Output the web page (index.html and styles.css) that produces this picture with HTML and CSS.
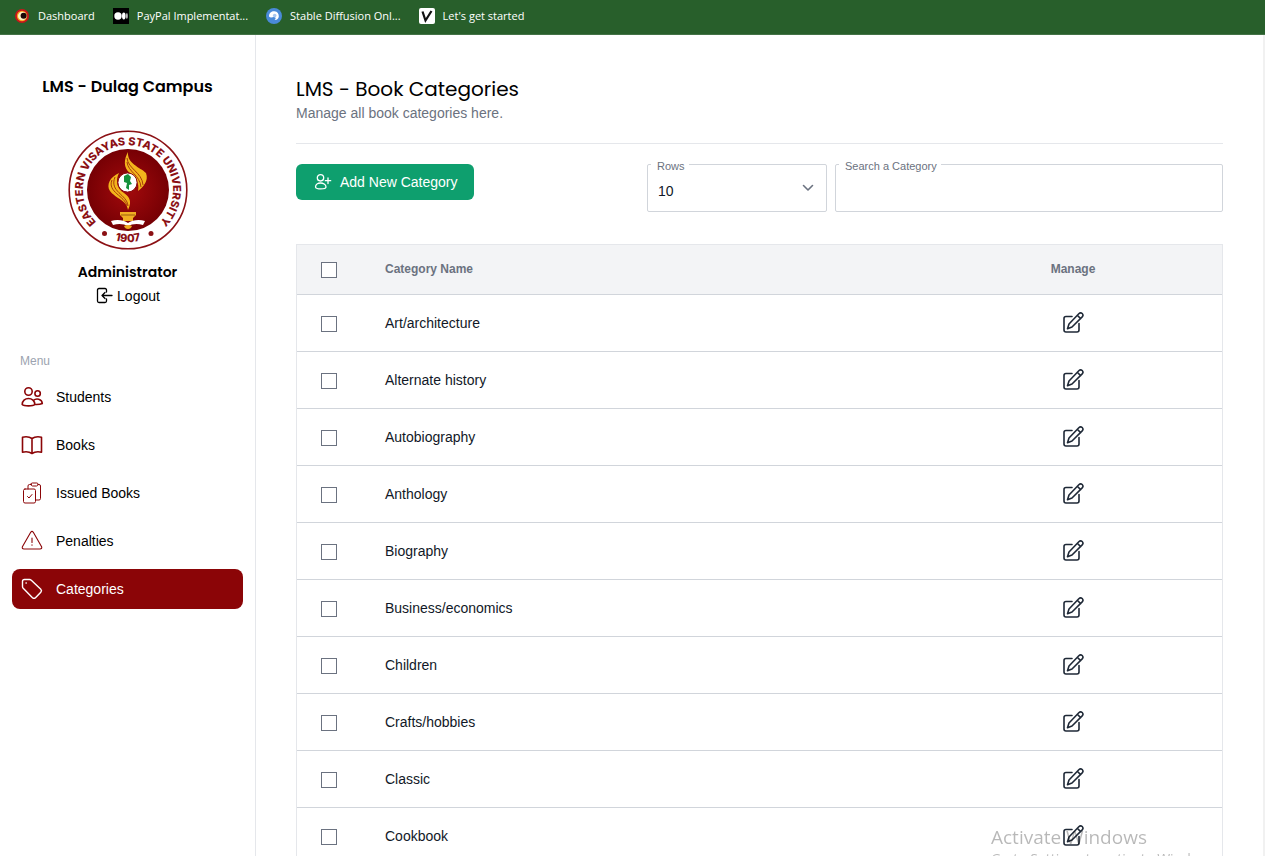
FILE: index.html
```html
<!DOCTYPE html>
<html lang="en">
<head>
<meta charset="utf-8">
<meta name="viewport" content="width=device-width, initial-scale=1">
<title>LMS - Book Categories</title>
<link rel="stylesheet" href="styles.css">
</head>
<body>
<nav class="bookmarks" aria-label="Bookmarks">
  <a class="bookmark" href="#">
    <svg width="16" height="16" viewBox="0 0 16 16"><circle cx="8" cy="8" r="7" fill="#c9151b"/><circle cx="8" cy="8" r="5.2" fill="#f6a21c"/><circle cx="8.3" cy="8" r="4.3" fill="#fff3c4"/><circle cx="9.600" cy="7.800" r="3" fill="#1c0705"/></svg>
    Dashboard</a>
  <a class="bookmark" href="#">
    <svg width="16" height="16" viewBox="0 0 16 16"><rect width="16" height="16" fill="#000"/><circle cx="5" cy="8" r="3.7" fill="#fff"/><ellipse cx="10.8" cy="8" rx="1.8" ry="3.4" fill="#fff"/><ellipse cx="13.9" cy="8" rx=".8" ry="3" fill="#ddd"/></svg>
    PayPal Implementat...</a>
  <a class="bookmark" href="#">
    <svg width="16" height="16" viewBox="0 0 16 16"><circle cx="8" cy="8" r="8" fill="#4a8ad8"/><path d="M3 8.500C3 4.500 6 3 8.500 3.300 11.500 3.600 13 6 12.800 8.500 12.500 11 10.500 12.500 8.500 12 10 11 10 9.500 8.500 9 7 8.500 5 10.500 3 8.500Z" fill="#fff"/><circle cx="8.700" cy="7.600" r="1.800" fill="#a9c8f0"/></svg>
    Stable Diffusion Onl...</a>
  <a class="bookmark" href="#">
    <svg width="16" height="16" viewBox="0 0 16 16"><rect width="16" height="16" rx="2" fill="#fff"/><path d="M3.500 3.500 6.500 12.500 12.500 3" fill="none" stroke="#111" stroke-width="2.200"/></svg>
    Let's get started</a>
</nav>

<div class="app">
  <aside class="sidebar">
    <h2 class="brand">LMS - Dulag Campus</h2>
    <svg class="seal" viewBox="0 0 120 120" role="img" aria-label="Eastern Visayas State University seal">
      <defs>
        <radialGradient id="disc"><stop offset="0" stop-color="#a30a0c"/><stop offset="1" stop-color="#760004"/></radialGradient>
        <path id="ring" d="M45 102.500A45 45 0 1 1 75 102.500"/>
        <path id="foot" d="M30 102.500A52 52 0 0 0 90 102.500"/>
      </defs>
      <circle cx="60" cy="60" r="58.800" fill="#fff" stroke="#8b1014" stroke-width="1.600"/>
      <circle cx="60" cy="60" r="41" fill="url(#disc)"/>
      <text class="seal-text"><textPath href="#ring" startOffset="50%" text-anchor="middle">EASTERN VISAYAS STATE UNIVERSITY</textPath></text>
      <text class="seal-year"><textPath href="#foot" startOffset="50%" text-anchor="middle">1907</textPath></text>
      <circle cx="36.500" cy="103.500" r="2.500" fill="#8b1014"/><circle cx="83" cy="103.500" r="2.500" fill="#8b1014"/>
      <path d="M60 22C59 34 72 37 78 43C81 51 75 57 70 61C72 53 67 47 62 43C55 38 56 29 60 22Z" fill="#f3b51c"/>
      <path d="M59 28C60 39 74 42 75 55M59 32C60 42 72 45 73 57" fill="none" stroke="#a83a0c" stroke-width="1"/>
      <path d="M51 43C42 47 38 55 42 61C48 69 59 70 60 80C65 70 60 66 56 63C49 59 47 51 51 43Z" fill="#f3b51c"/>
      <path d="M47 47C41 62 59 64 60 76M44 50C39 62 57 66 59 76" fill="none" stroke="#a83a0c" stroke-width="1"/>
      <circle cx="59.500" cy="52.500" r="9.600" fill="#fff" stroke="#8b1014"/>
      <path d="M56 46L60 44 63 47 62 51 64 54 61 55 61 60 58 58 59 53 56 52Z" fill="#16913c"/>
      <path d="M52 82H68V85L65 88V91H55V88L52 85Z" fill="#f0ad22"/><path d="M53 85H67" stroke="#9c5d0c"/>
      <path d="M43 91C49 89 56 90 60 93C64 90 71 89 77 91L75 95C69 93 64 94 60 96C56 94 51 93 45 95Z" fill="#fff"/>
      <path d="M56 96Q60 94 64 96Q63 99 60 99Q57 99 56 96Z" fill="#f0ad22"/>
    </svg>
    <p class="user-name">Administrator</p>
    <a class="logout" href="#">
      <svg class="icon-small" viewBox="0 0 18 18"><path d="M11.500 5V3Q11.500 1.500 10 1.500H4Q2.500 1.500 2.500 3V14Q2.500 15.500 4 15.500H10Q11.500 15.500 11.500 14V12M17 8.500H7M10 5.500 7 8.500 10 11.500"/></svg>
      Logout</a>
    <nav class="menu" aria-labelledby="menu-title">
      <p class="menu-title" id="menu-title">Menu</p>
      <a class="menu-item" href="#">
        <svg class="icon" viewBox="0 0 24 24" stroke-width="1.600"><circle cx="8.500" cy="6.500" r="3.700"/><circle cx="17.600" cy="8.500" r="2.700"/><path d="M2.200 19.500C2.200 16 5 13.500 8.500 13.500S14.800 16 14.800 19.500C13 21.300 4 21.300 2.200 19.500ZM13.500 15.300C16 13 22 13.500 22.300 18.500Q20 19.700 15 19.500"/></svg>
        Students</a>
      <a class="menu-item" href="#">
        <svg class="icon" viewBox="0 0 24 24" stroke-width="1.600"><path d="M12 5.500C9.500 3.800 6 3.500 2.500 4.200V19.200C6 18.500 9.500 18.800 12 20.500 14.500 18.800 18 18.500 21.500 19.200V4.200C18 3.500 14.500 3.800 12 5.500ZM12 5.500V20.500"/></svg>
        Books</a>
      <a class="menu-item" href="#">
        <svg class="icon" viewBox="0 0 24 24" stroke-width="1"><path d="M8 8V5Q8 3.500 9.500 3.500H11M18 3.500H19Q20.500 3.500 20.500 5V17.500Q20.500 19 19 19H16"/><rect x="3.500" y="8" width="12" height="14" rx="1.500"/><path d="M11 3.200Q11 2 12.200 2H16.800Q18 2 18 3.200 18 5 16.500 5H12.500Q11 5 11 3.200ZM7.500 15.500 9 17 12 13.500"/></svg>
        Issued Books</a>
      <a class="menu-item" href="#">
        <svg class="icon" viewBox="0 0 24 24" stroke-width="1.100"><path d="M10.700 3.300Q12 1.500 13.300 3.300L21.600 17.700Q22.300 20 20 20H4Q1.700 20 2.400 17.700ZM12 9V13.500M12 15.700V16.300"/></svg>
        Penalties</a>
      <a class="menu-item active" href="#" aria-current="page">
        <svg class="icon" viewBox="0 0 24 24" stroke-width="1.400"><path d="M2.500 4.500Q2.500 2.500 4.500 2.500H9.500Q10.500 2.500 11.300 3.200L20.800 12.200Q22.200 13.700 20.800 15.200L15.500 20.700Q14 22 12.500 20.700L3.200 11.300Q2.500 10.500 2.500 9.500ZM6 6H6.300"/></svg>
        Categories</a>
    </nav>
  </aside>

  <main class="content">
    <header class="page-head">
      <h1 class="page-title">LMS - Book Categories</h1>
      <p class="page-note">Manage all book categories here.</p>
    </header>
    <div class="toolbar">
      <button class="add-button" type="button">
        <svg class="icon-small" viewBox="0 0 18 18"><circle cx="6.500" cy="4.800" r="3.200"/><path d="M1.500 14C1.500 11.500 4 10 6.500 10S12 11.500 12 14C12 16.500 1.500 16.500 1.500 14ZM14 5V10.500M11.300 7.700H16.700"/></svg>
        Add New Category</button>
      <div class="field field-rows">
        <label for="rows">Rows</label>
        <select id="rows"><option>10</option><option>25</option><option>50</option></select>
        <svg class="chevron" viewBox="0 0 12 12"><path d="M1.500 3.500 6 8 10.500 3.500"/></svg>
      </div>
      <div class="field field-search">
        <label for="search">Search a Category</label>
        <input id="search" type="text">
      </div>
    </div>

    <svg class="sprite" aria-hidden="true"><symbol id="edit" viewBox="0 0 24 24"><path d="M11 5.500H5Q3 5.500 3 7.500V19Q3 21 5 21H16Q18 21 18 19V12.500M17.800 2.700Q19.500 1 21.200 2.500 22.800 4.200 21.200 5.900L11 16 6.500 17.700 8 13ZM16.300 4.300 19.600 7.600"/></symbol></svg>
    <table class="categories">
      <thead><tr><th class="col-check"><input type="checkbox" aria-label="Select all"></th><th>Category Name</th><th class="col-manage">Manage</th></tr></thead>
      <tbody>
        <tr><td><input type="checkbox" aria-label="Select Art/architecture"></td><td>Art/architecture</td><td class="col-manage"><button class="edit" type="button" aria-label="Edit"><svg><use href="#edit"/></svg></button></td></tr>
        <tr><td><input type="checkbox" aria-label="Select Alternate history"></td><td>Alternate history</td><td class="col-manage"><button class="edit" type="button" aria-label="Edit"><svg><use href="#edit"/></svg></button></td></tr>
        <tr><td><input type="checkbox" aria-label="Select Autobiography"></td><td>Autobiography</td><td class="col-manage"><button class="edit" type="button" aria-label="Edit"><svg><use href="#edit"/></svg></button></td></tr>
        <tr><td><input type="checkbox" aria-label="Select Anthology"></td><td>Anthology</td><td class="col-manage"><button class="edit" type="button" aria-label="Edit"><svg><use href="#edit"/></svg></button></td></tr>
        <tr><td><input type="checkbox" aria-label="Select Biography"></td><td>Biography</td><td class="col-manage"><button class="edit" type="button" aria-label="Edit"><svg><use href="#edit"/></svg></button></td></tr>
        <tr><td><input type="checkbox" aria-label="Select Business/economics"></td><td>Business/economics</td><td class="col-manage"><button class="edit" type="button" aria-label="Edit"><svg><use href="#edit"/></svg></button></td></tr>
        <tr><td><input type="checkbox" aria-label="Select Children"></td><td>Children</td><td class="col-manage"><button class="edit" type="button" aria-label="Edit"><svg><use href="#edit"/></svg></button></td></tr>
        <tr><td><input type="checkbox" aria-label="Select Crafts/hobbies"></td><td>Crafts/hobbies</td><td class="col-manage"><button class="edit" type="button" aria-label="Edit"><svg><use href="#edit"/></svg></button></td></tr>
        <tr><td><input type="checkbox" aria-label="Select Classic"></td><td>Classic</td><td class="col-manage"><button class="edit" type="button" aria-label="Edit"><svg><use href="#edit"/></svg></button></td></tr>
        <tr><td><input type="checkbox" aria-label="Select Cookbook"></td><td>Cookbook</td><td class="col-manage"><button class="edit" type="button" aria-label="Edit"><svg><use href="#edit"/></svg></button></td></tr>
      </tbody>
    </table>
  </main>
</div>
<div class="watermark"><p class="watermark-title">Activate Windows</p><p class="watermark-note">Go to Settings to activate Windows.</p></div>
</body>
</html>
```
FILE: styles.css
```css
* { box-sizing: border-box; }
body {
  display: flex;
  flex-direction: column;
  height: 100vh;
  margin: 0;
  overflow: hidden;
  background: #fff;
  color: #000;
  font: 14px/20px "Liberation Sans", Arial, sans-serif;
}
h1, h2, p { margin: 0; }
a { color: inherit; text-decoration: none; }
button, input, select { font: inherit; color: inherit; }

.bookmarks {
  display: flex;
  flex: none;
  gap: 18px;
  height: 35px;
  padding: 6px 14px 8px;
  background: #285f2b;
  border-bottom: 1px solid #447347;
  color: #fff;
  font: 11px/20px "Segoe UI", "Open Sans", sans-serif;
}
.bookmark { display: flex; align-items: center; gap: 8px; white-space: nowrap; }

.app { display: flex; flex: 1; min-height: 0; border-right: 2px solid #f1f1f1; }
.sidebar {
  display: flex;
  flex: none;
  flex-direction: column;
  align-items: center;
  width: 256px;
  padding: 40px 12px;
  border-right: 1px solid #e5e7eb;
}
.brand, .user-name, .page-title { font-family: Poppins, Inter, sans-serif; }
.brand { font-size: 16px; line-height: 24px; font-weight: 600; }
.seal { width: 120px; height: 120px; margin: 31px 0 12px; }
.seal-text, .seal-year { fill: #8b1014; font-family: Inter, sans-serif; font-weight: 800; font-size: 11px; }
.user-name { font-size: 14px; line-height: 20px; font-weight: 600; }
.logout { display: flex; align-items: center; gap: 4px; margin-top: 4px; }
.icon, .icon-small, .chevron {
  flex: none;
  fill: none;
  stroke: currentColor;
  stroke-linecap: round;
  stroke-linejoin: round;
}
.icon { width: 24px; height: 24px; color: #8b0507; }
.icon-small { width: 18px; height: 18px; stroke-width: 1.3; }

.menu { display: flex; flex-direction: column; gap: 8px; width: 100%; margin-top: 45px; }
.menu-title { padding: 0 8px; margin-bottom: -2px; color: #9ca3af; font-size: 12px; line-height: 20px; }
.menu-item { display: flex; align-items: center; gap: 12px; height: 40px; padding: 0 8px; border-radius: 8px; }
.menu-item.active, .active .icon { color: #fff; }
.menu-item.active { background: #8b0507; }

.content { flex: 1; min-width: 0; padding: 40px; }
.page-head { padding-bottom: 20px; border-bottom: 1px solid #e5e7eb; }
.page-title { font-size: 20px; line-height: 28px; font-weight: 400; }
.page-note { color: #6b7280; }
.toolbar { display: flex; align-items: flex-start; gap: 8px; margin: 20px 0 32px; }
.add-button {
  display: flex;
  align-items: center;
  gap: 8px;
  height: 36px;
  margin-right: auto;
  padding: 0 16px 0 18px;
  border: 0;
  border-radius: 6px;
  background: #0e9f6e;
  color: #fff;
}
.field { position: relative; height: 48px; }
.field-rows { width: 180px; }
.field-search { width: 388px; }
.field label {
  position: absolute;
  top: -6px;
  left: 4px;
  padding: 0 4px 0 6px;
  background: #fff;
  color: #6b7280;
  font-size: 11px;
  line-height: 16px;
}
.field select, .field input {
  width: 100%;
  height: 100%;
  padding: 6px 10px 0;
  border: 1px solid #d1d5db;
  border-radius: 2px;
  background: #fff;
  color: #111827;
  appearance: none;
}
.chevron { position: absolute; top: 18px; right: 13px; width: 12px; height: 12px; color: #6b7280; stroke-width: 1.6; pointer-events: none; }

.sprite { position: absolute; width: 0; height: 0; }
.categories { width: 100%; border-collapse: separate; border-spacing: 0; table-layout: fixed; border: 1px solid #e5e7eb; }
.categories th, .categories td { height: 57px; padding: 0 24px; border-bottom: 1px solid #d1d5db; text-align: left; color: #111827; }
.categories th { height: 50px; padding-bottom: 2px; background: #f3f4f6; color: #6b7280; font-size: 12px; }
.categories .col-check { width: 64px; }
.categories .col-manage { width: 298px; text-align: center; }
.categories input {
  display: block;
  width: 16px;
  height: 16px;
  margin: 2px 0 0;
  border: 1px solid #6b7280;
  background: #fff;
  appearance: none;
}
.edit { display: block; width: 24px; height: 24px; margin: 0 auto; padding: 0; border: 0; background: none; }
.edit svg { display: block; width: 24px; height: 24px; fill: none; stroke: #1f2937; stroke-width: 1.6; stroke-linecap: round; stroke-linejoin: round; }

.watermark { position: fixed; right: 0; bottom: -12px; width: 274px; color: #000; opacity: .28; font-family: "Segoe UI", "Open Sans", sans-serif; pointer-events: none; }
.watermark-title { font-size: 19px; line-height: 26px; }
.watermark-note { font-size: 14px; line-height: 18px; white-space: nowrap; }
```
